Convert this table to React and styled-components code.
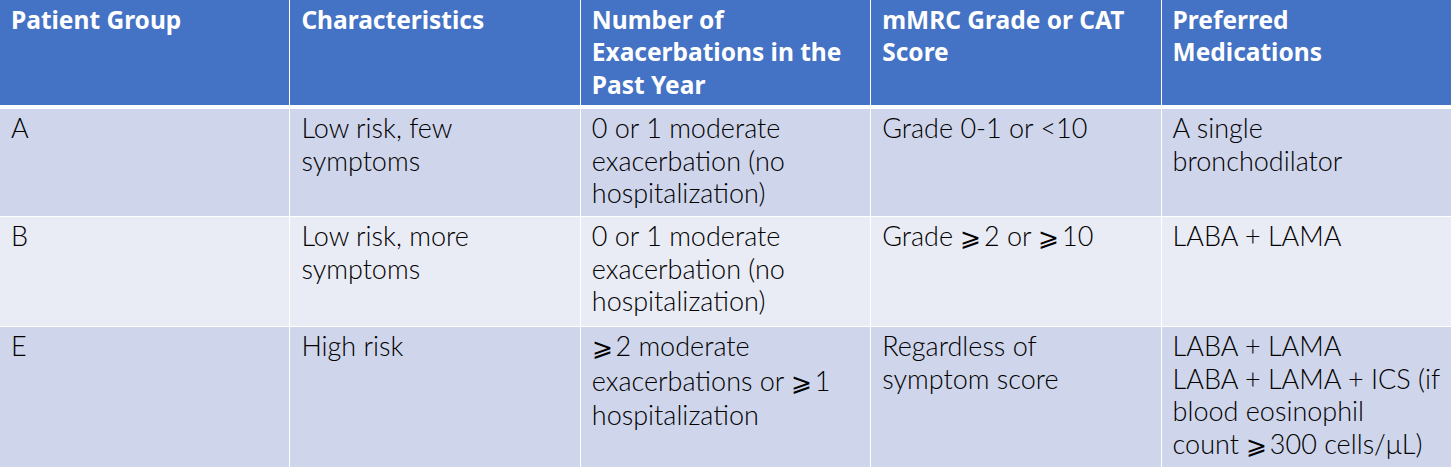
import React from "react";
import styled, { createGlobalStyle } from "styled-components";

const Global = createGlobalStyle`
  html, body { margin: 0; padding: 0; background: #ffffff; overflow: hidden; }
  body { font-family: Lato, "Noto Sans", sans-serif; }
`;

const Grid = styled.div`
  width: 1451px;
  padding-right: 1px;
  background: #ffffff;
  display: grid;
  grid-template-columns: repeat(5, 1fr);
  grid-template-rows: 108px 107px 109px 150px;
  column-gap: 1px;
  row-gap: 1px;
`;

const HeadCell = styled.div`
  background: #4472c4;
  color: #ffffff;
  font-family: "Noto Sans", sans-serif;
  font-weight: 700;
  font-size: 24.5px;
  line-height: 32.4px;
  padding: 4px 10px 0 11px;
  margin-bottom: 3px;
`;

const Cell = styled.div`
  background: ${(p) => (p.$alt ? "#e9ebf5" : "#cfd5ea")};
  color: #000000;
  font-family: Lato, "Noto Sans", sans-serif;
  font-weight: 300;
  font-size: 27px;
  line-height: 32.5px;
  padding: 3px 8px 0 11px;
`;

const Line = styled.span`
  display: block;
  white-space: nowrap;
`;

const Ge = styled.span`
  display: inline-block;
  width: 0.95em;
  font-family: "DejaVu Sans", "Noto Sans CJK SC", sans-serif;
  font-weight: 200;
  font-size: 0.92em;
`;

const g = <Ge>⩾</Ge>;

const headers = [
  ["Patient Group"],
  ["Characteristics"],
  ["Number of", "Exacerbations in the", "Past Year"],
  ["mMRC Grade or CAT", "Score"],
  ["Preferred", "Medications"],
];

const rows = [
  {
    cells: [
      ["A"],
      ["Low risk, few", "symptoms"],
      ["0 or 1 moderate", "exacerbation (no", "hospitalization)"],
      ["Grade 0-1 or <10"],
      ["A single", "bronchodilator"],
    ],
  },
  {
    alt: true,
    cells: [
      ["B"],
      ["Low risk, more", "symptoms"],
      ["0 or 1 moderate", "exacerbation (no", "hospitalization)"],
      [<>Grade {g}2 or {g}10</>],
      ["LABA + LAMA"],
    ],
  },
  {
    cells: [
      ["E"],
      ["High risk"],
      [<>{g}2 moderate</>, <>exacerbations or {g}1</>, "hospitalization"],
      ["Regardless of", "symptom score"],
      [
        "LABA + LAMA",
        "LABA + LAMA + ICS (if",
        "blood eosinophil",
        <>count {g}300 cells/μL)</>,
      ],
    ],
  },
];

export default function App() {
  return (
    <>
      <Global />
      <Grid>
        {headers.map((h, i) => (
          <HeadCell key={i}>
            {h.map((l, k) => (
              <Line key={k}>{l}</Line>
            ))}
          </HeadCell>
        ))}
        {rows.map((r, i) =>
          r.cells.map((c, j) => (
            <Cell key={`${i}-${j}`} $alt={r.alt}>
              {c.map((l, k) => (
                <Line key={k}>{l}</Line>
              ))}
            </Cell>
          ))
        )}
      </Grid>
    </>
  );
}
